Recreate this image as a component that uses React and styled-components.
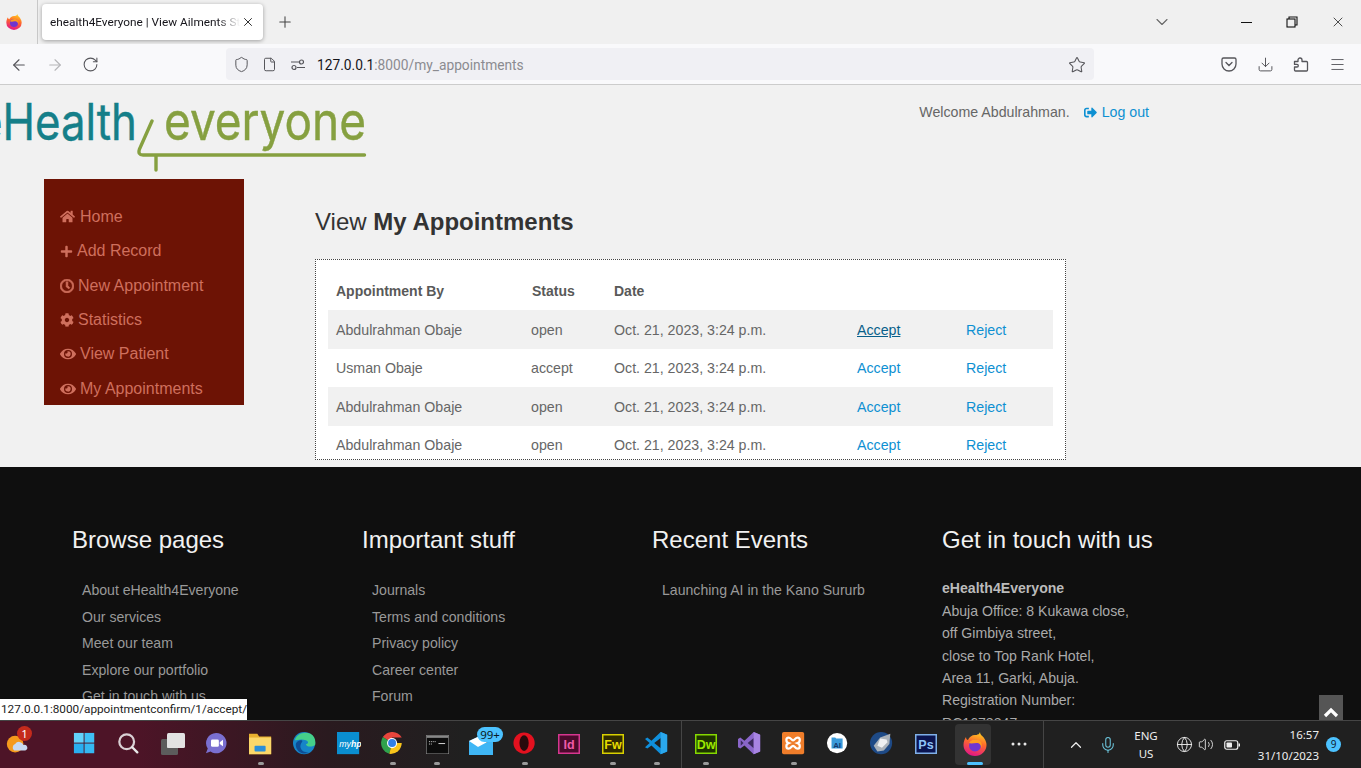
import React from "react";
import styled, { createGlobalStyle } from "styled-components";
import { ArrowLeft, ArrowRight, RotateCw, Shield, File, Star, Download, Menu, X, Plus, ChevronDown, ChevronUp, Mic, Globe, Volume2 } from "lucide-react";
import { FaHome, FaPlus, FaCog, FaEye, FaRegClock, FaSignOutAlt } from "react-icons/fa";

const Global = createGlobalStyle`
  html, body { margin: 0; padding: 0; height: 100%; overflow: hidden; }
  body { font-family: "Liberation Sans", Arial, sans-serif; background: #f1f1f1; }
  * { box-sizing: border-box; }
`;

const Screen = styled.div`
  height: 100vh; display: flex; flex-direction: column; overflow: hidden; position: relative;
`;
const TabStrip = styled.div`
  height: 44px; flex: none; background: #f0f0f0; display: flex; align-items: center; color: #222;
`;
const BrandSlot = styled.div`
  width: 38px; height: 44px; padding-left: 6px; display: flex; align-items: center; border-right: 1px solid #c8c8c8;
`;
const Tab = styled.div`
  width: 221px; height: 36px; margin-left: 4px; padding: 0 8px; background: #fff; border-radius: 4px;
  box-shadow: 0 1px 4px rgba(0,0,0,.35); display: flex; align-items: center; justify-content: space-between;
`;
const TabTitle = styled.span`
  font: 11.8px/16px Roboto, sans-serif; width: 190px; white-space: nowrap; overflow: hidden;
  color: #15141a; -webkit-mask-image: linear-gradient(to right, #000 88%, transparent);
`;
const NewTab = styled.div`
  margin-left: 13px; display: flex; color: #444;
`;
const WindowControls = styled.div`
  margin-left: auto; display: flex; align-items: center;
`;
const ListAll = styled.div`
  display: flex; color: #666; margin-right: 51px;
`;
const WinButton = styled.div`
  width: 46px; display: flex; justify-content: center; color: #111;
`;
const Toolbar = styled.div`
  height: 41px; flex: none; background: #f9f9fb; border-bottom: 1px solid #ccc; display: flex; align-items: center; padding: 1px 0 0 10px;
`;
const NavButton = styled.div`
  width: 36px; display: flex; color: ${p => (p.$off ? "#b5b5b8" : "#55555a")};
`;
const UrlBar = styled.div`
  margin: -2px 0 0 108px; width: 868px; height: 32px; background: #f0f0f4; border-radius: 4px; display: flex; align-items: center; padding: 2px 8px 0 7px; color: #55555a;
`;
const UrlIcon = styled.div`
  width: ${p => p.$w}px; display: flex;
`;
const UrlText = styled.div`
  font: 13.75px/18px Roboto, sans-serif; color: #8b8b90; margin-left: 2px;
  b { font-weight: 400; color: #15141a; }
`;
const StarSlot = styled.div`
  margin-left: auto; display: flex;
`;
const ToolActions = styled.div`
  display: flex; margin-left: 117px;
`;
const ToolButton = styled.div`
  width: 36px; display: flex; justify-content: center; color: #55555a;
`;

const Page = styled.div`
  flex: 1; min-height: 0; display: flex; flex-direction: column; overflow: hidden; background: #f1f1f1; position: relative;
`;
const Header = styled.header`
  height: 94px; flex: none; display: flex; justify-content: space-between; align-items: flex-start;
`;
const Welcome = styled.div`
  padding: 19px 212px 0 0; font-size: 14.2px; line-height: 16px; color: #666; display: flex; gap: 14px;
`;
const LogOut = styled.a`
  color: #0e90d2; display: flex; align-items: center; gap: 5px;
`;
const Body = styled.div`
  height: 288px; flex: none; display: flex; padding-left: 44px;
`;
const Sidebar = styled.nav`
  width: 200px; height: 226px; background: #6d1305; padding-top: 19.7px; flex: none;
`;
const SideItem = styled.div`
  height: 34.4px; padding: 2px 0 0 16px; font-size: 16px; color: #cf6f5d; display: flex; align-items: center; gap: ${p => p.$gap ?? 5}px; white-space: nowrap;
`;
const Main = styled.main`
  margin-left: 71px; width: 751px;
`;
const Title = styled.h1`
  margin: 27px 0 0; font-size: 24px; line-height: 32px; font-weight: 400; color: #333;
  b { font-weight: 700; }
`;
const TableBox = styled.div`
  margin-top: 21px; height: 201px; background: #fff; border: 1px dotted #444; padding: 12px 12px 0; overflow: hidden;
`;
const Table = styled.table`
  width: 725px; border-collapse: collapse; table-layout: fixed; font-size: 14.2px; color: #666;
`;
const HeadCell = styled.th`
  height: 38px; padding: 0 8px; text-align: left; font-size: 14px; font-weight: 700; color: #595959;
`;
const Row = styled.tr`
  background: ${p => (p.$alt ? "#f1f1f1" : "#fff")};
  height: ${p => (p.$alt ? 39 : 38)}px;
`;
const Cell = styled.td`
  padding: 0 8px 0 ${p => p.$pl ?? 8}px;
`;
const ActionLink = styled.a`
  color: ${p => (p.$hover ? "#095f8a" : "#0e90d2")};
  text-decoration: ${p => (p.$hover ? "underline" : "none")};
`;

const Footer = styled.footer`
  flex: 1; min-height: 0; background: #0f0f0f; overflow: hidden; padding: 57.3px 0 0 72px; display: grid; grid-template-columns: repeat(4, 290px); align-content: start;
`;
const FootCol = styled.div``;
const FootTitle = styled.h3`
  margin: 0 0 21px; font-size: 24px; line-height: 32px; font-weight: 400; color: #f1f1f1;
`;
const FootLink = styled.div`
  padding-left: 10px; font-size: 14.1px; line-height: 26.4px; color: #999;
`;
const Address = styled.div`
  font-size: 14.1px; line-height: 22.4px; color: #aaa;
  b { color: #bbb; display: block; }
`;
const StatusTip = styled.div`
  position: absolute; left: 0; bottom: 0; height: 21px; width: 247px; padding-left: 1px; background: #fff; color: #222;
  font: 11.75px/21px Roboto, sans-serif; white-space: nowrap; box-shadow: 0 0 2px rgba(0,0,0,.3);
`;
const ToTop = styled.div`
  position: absolute; right: 18px; bottom: 0; width: 24px; height: 25px; background: #555; display: flex; align-items: flex-end; justify-content: center; padding-bottom: 1px;
`;

const Taskbar = styled.div`
  height: 48px; flex: none; border-top: 1px solid #454545; display: flex; align-items: stretch; color: #fff;
  background: linear-gradient(90deg, #4d1427 0, #4d1427 10%, #2a1a1f 24%, #202020 34%, #202020 100%);
`;
const Weather = styled.div`
  width: 34px; margin-right: 29px; position: relative; display: flex; align-items: center; justify-content: center;
`;
const Slot = styled.div`
  width: 44px; position: relative; display: flex; align-items: center; justify-content: center; padding-bottom: 1px;
`;
const ActiveSlot = styled(Slot)`
  margin-left: 5px;
  &::before { content: ""; position: absolute; left: 2px; right: 6px; top: 3px; bottom: 3px; background: #333; border-radius: 4px; }
  svg { position: relative; }
`;
const RunDot = styled.span`
  position: absolute; bottom: 3px; left: 50%; transform: translateX(-50%); width: ${p => (p.$active ? 16 : 6)}px; height: 3px; border-radius: 2px; background: ${p => (p.$active ? "#4cc2ff" : "#9a9a9a")};
`;
const Badge = styled.span`
  position: absolute; border-radius: 9px; background: ${p => p.$bg}; color: ${p => p.$fg}; font: 11.5px/15px "Noto Sans", sans-serif; text-align: center;
  left: ${p => p.$l}px; top: ${p => p.$t}px; width: ${p => p.$w}px; height: ${p => p.$h}px;
`;
const Divider = styled.div`
  width: 1px; background: #454545; margin-left: ${p => p.$ml}px; margin-right: ${p => p.$mr}px;
`;
const Tray = styled.div`
  flex: 1; display: flex; align-items: center; position: relative; font: 12px/18px "Noto Sans", sans-serif; color: #eee;
`;
const TrayIcon = styled.div`
  width: ${p => p.$w}px; display: flex; justify-content: center; color: ${p => p.$c ?? "#eee"};
`;
const Lang = styled.div`
  width: 48px; text-align: center; font-size: 11.5px;
`;
const Clock = styled.div`
  width: 69px; text-align: right; font-size: 11.5px; line-height: 21px;
`;
const Count = styled.div`
  width: 15px; height: 15px; margin-left: 7px; border-radius: 50%; background: #4cc2ff; color: #102030; font-size: 10px; line-height: 15px; text-align: center;
`;

const Logo = () => (
  <svg width="372" height="94" viewBox="0 0 372 94" role="img">
    <text x="-23" y="55" textLength="160" lengthAdjust="spacingAndGlyphs" fontFamily="Inter, sans-serif" fontWeight="400" fontSize="51" fill="#157f89" stroke="#157f89" strokeWidth="0.4">eHealth</text>
    <text x="164" y="55" textLength="202" lengthAdjust="spacingAndGlyphs" fontFamily="Inter, sans-serif" fontWeight="400" fontSize="53" fill="#86a040" stroke="#86a040" strokeWidth="0.4">everyone</text>
    <path d="M152 36 L139.500 64 Q137.500 70 143 70 H364.500 M156 70 V85" fill="none" stroke="#86a040" strokeWidth="3.400" strokeLinecap="round" />
  </svg>
);

const FirefoxIcon = ({ s = 16 }) => (
  <svg width={s} height={s} viewBox="0 0 24 24">
    <defs>
      <linearGradient id={`ff${s}`} x1="0.700" y1="0" x2="0.400" y2="1"><stop offset="0" stopColor="#ffd21f" /><stop offset=".45" stopColor="#ff6a2b" /><stop offset="1" stopColor="#e31587" /></linearGradient>
    </defs>
    <path d="M17 0c0 3 3 4 4 6 2 3 2.500 5 2.500 7a11.500 11 0 1 1-23 0c0-3 1-6 2.500-8 0 2 1 3 2 3 1-3 4-5 7-5 2 0 4 0 5-3z" fill={`url(#ff${s})`} />
    <circle cx="12" cy="13.500" r="6" fill="#6f35d0" />
    <path d="M6 11c2-3.500 6-4.500 9.500-3 3.500 1.500 4 5.500 2.500 8.500 .5-3.500-1.500-5.500-4.500-5.500-2.500 0-5.500 1-7.500 0z" fill="#ff9a1f" />
  </svg>
);
const Ic = ({ children, w = 26, h = 26, vb = "0 0 26 26" }) => <svg width={w} height={h} viewBox={vb}>{children}</svg>;

const WeatherIcon = () => (
  <Ic w={24} h={24}><circle cx="11" cy="12" r="9" fill="#f59a1c" /><path d="M10 19a4 4 0 0 1 1-7 5 5 0 0 1 9 1 3 3 0 0 1 2 6z" fill="#c7d9f0" /></Ic>
);
const WindowsIcon = () => (
  <Ic w={24} h={24}><g fill="#35b8f2"><rect x="1" y="1" width="10.500" height="10.500" fill="#62d2fb" /><rect x="12.500" y="1" width="10.500" height="10.500" fill="#3fc0f7" /><rect x="1" y="12.500" width="10.500" height="10.500" fill="#29aef0" /><rect x="12.500" y="12.500" width="10.500" height="10.500" /></g></Ic>
);
const SearchIcon = () => (
  <Ic w={24} h={24}><circle cx="10.500" cy="10.500" r="8" fill="none" stroke="#d9d0d4" strokeWidth="2.400" /><path d="M16.500 16.500 L22 22" stroke="#e8e8e8" strokeWidth="2.600" strokeLinecap="round" /></Ic>
);
const TaskViewIcon = () => (
  <Ic w={26} h={24} vb="0 0 26 24"><rect x="1" y="7" width="17" height="16" rx="1.500" fill="#5c5c5c" /><rect x="7" y="7" width="11" height="9" fill="#9b9b9b" /><rect x="7" y="1" width="18" height="15" rx="1.500" fill="#e2e2e2" /></Ic>
);
const TeamsIcon = () => (
  <Ic w={24} h={24}><path d="M12 1a11 11 0 1 1-6 20l-5 2 2-5A11 11 0 0 1 12 1z" fill="#7a6fd0" /><rect x="6.500" y="8" width="8.500" height="8" rx="1.500" fill="#fff" /><path d="M16 11l3.500-2.500v7L16 13z" fill="#fff" /></Ic>
);
const ExplorerIcon = () => (
  <Ic w={24} h={24}><path d="M0 2h9l2 3H24v19H0z" fill="#e8b02f" /><rect y="6" width="24" height="18" fill="#fbd769" /><rect x="6" y="15" width="12" height="6" rx="1" fill="#2a8ed8" /></Ic>
);
const EdgeIcon = () => (
  <Ic w={24} h={24}><circle cx="12" cy="12" r="12" fill="#1684c8" /><path d="M2 9C4 2 12-1 19 2c4 2 6 7 5 12-4 3-10 2-10-1 3 0 3-3 0-4C9 7 4 9 2 9z" fill="#45cf8a" /><path d="M9 12c-3 5 1 11 8 10-7 4-14-2-14-8 0-3 3-5 6-5 1 0 2 1 0 3z" fill="#0d4d96" /></Ic>
);
const MyHpIcon = () => (
  <Ic w={24} h={24}><rect width="24" height="24" fill="#0a8ed0" /><text x="2.500" y="16" fontSize="9.500" fontStyle="italic" fontFamily="Liberation Sans, sans-serif" fill="#fff">my<tspan fontWeight="700">hp</tspan></text></Ic>
);
const ChromeIcon = () => (
  <Ic w={24} h={24}><path d="M12 12 2 5.500A12 12 0 0 1 22.500 6H12z" fill="#e8453c" /><path d="M12 12 2 5.500A12 12 0 0 0 9 23.600z" fill="#2fa24c" /><path d="M12 12h10.500A12 12 0 0 1 9 23.600z" fill="#f8c41b" /><circle cx="12" cy="12" r="5.500" fill="#fff" /><circle cx="12" cy="12" r="4.300" fill="#2f7fe8" /></Ic>
);
const CmdIcon = () => (
  <Ic w={23} h={19} vb="0 0 24 20"><rect width="24" height="20" fill="#0c0c0c" stroke="#999" strokeWidth="1" /><rect x="0.500" y="0.500" width="23" height="2.500" fill="#888" /><path d="M3 7h7M3 9.500h4" stroke="#ddd" strokeWidth="1" strokeDasharray="1 1" /><path d="M13 9h7" stroke="#ddd" strokeWidth="1" /></Ic>
);
const MailIcon = () => (
  <Ic w={24} h={22} vb="0 0 24 22"><path d="M0 8 17 0v22H0z" fill="#20a0ee" /><path d="M0 8l9 6 15-8v16H0z" fill="#3fb6f5" /><path d="M0 8 17 0l7 6-15 8z" fill="#fff" /></Ic>
);
const OperaIcon = () => (
  <Ic w={24} h={24}><ellipse cx="12" cy="12" rx="11.500" ry="11.500" fill="#e3111f" /><ellipse cx="12" cy="12" rx="5" ry="8.500" fill="#2a0a0c" /></Ic>
);
const AppTile = ({ label, line, fill, color, w = 22, h = 20 }) => (
  <Ic w={w} h={h} vb={`0 0 ${w} ${h}`}>
    <rect x="0.750" y="0.750" width={w - 1.5} height={h - 1.5} fill={fill} stroke={line} strokeWidth="1.500" />
    <text x={w / 2} y={h - 5} textAnchor="middle" fontSize="12.500" fontWeight="700" fontFamily="Liberation Sans, sans-serif" fill={color}>{label}</text>
  </Ic>
);
const VsCodeIcon = () => (
  <Ic w={24} h={24}><path d="M17 0l7 3v18l-7 3L7 14.500 2.500 18 0 16.500 5 12 0 7.500 2.500 6 7 9.500z" fill="#0f8fdc" /><path d="M17 6.500 10 12l7 5.500z" fill="#202020" /><path d="M17 0l7 3v18l-7 3z" fill="#2aa7ec" /></Ic>
);
const VisualStudioIcon = () => (
  <Ic w={24} h={24}><path d="M17 0l7 3v18l-7 3L7 14.500 2.500 18 0 16.500v-9L2.500 6 7 9.500z" fill="#8a66c9" /><path d="M17 6.500 10.500 12l6.500 5.500z" fill="#3a2a5c" /><path d="M3 9v6l3-3z" fill="#3a2a5c" /><path d="M17 0l7 3v18l-7 3z" fill="#a784e2" /></Ic>
);
const XamppIcon = () => (
  <Ic w={24} h={24}><rect width="24" height="24" rx="2" fill="#ef7d2a" /><path d="M7 6c-3 0-3 5 0 6-3 1-3 6 0 6 3 0 3-3 5-3s2 3 5 3c3 0 3-5 0-6 3-1 3-6 0-6-3 0-3 3-5 3s-2-3-5-3z" fill="none" stroke="#fff" strokeWidth="2.400" /></Ic>
);
const AiIcon = () => (
  <Ic w={24} h={24}><circle cx="12" cy="12" r="11" fill="#fff" /><path d="M6 6h4l1 1h7v11H6z" fill="#3a9ad9" /><text x="12" y="17" textAnchor="middle" fontSize="8.500" fontWeight="700" fontFamily="Liberation Sans, sans-serif" fill="#123a70">AI</text></Ic>
);
const PenIcon = () => (
  <Ic w={24} h={24}><circle cx="12" cy="12" r="12" fill="#1e4a86" /><path d="M4 15 11 6l11-4-1 11-6 7-7 1z" fill="#aab2ba" /><path d="M11 7l7 1 1 3-6 6-5-2z" fill="#eef0f2" /></Ic>
);
const BatteryIcon = () => (
  <Ic w={16} h={12} vb="0 0 16 12"><rect x="0.750" y="1.750" width="13" height="8.500" rx="2" fill="none" stroke="#eee" strokeWidth="1.200" /><rect x="2.500" y="3.500" width="5.500" height="5" rx="0.800" fill="#eee" /><rect x="14.500" y="4.500" width="1.500" height="3" fill="#eee" /></Ic>
);
const PocketIcon = () => (
  <Ic w={16} h={16} vb="0 0 16 16"><path d="M2.500 2h11A1.500 1.500 0 0 1 15 3.500V8a7 7 0 0 1-14 0V3.500A1.500 1.500 0 0 1 2.500 2z" fill="none" stroke="currentColor" strokeWidth="1.300" /><path d="M5 6.500 8 9.500 11 6.500" fill="none" stroke="currentColor" strokeWidth="1.300" strokeLinecap="round" /></Ic>
);
const PuzzleIcon = () => (
  <Ic w={16} h={16} vb="0 0 16 16"><path d="M1.500 5.500H5V4a2 2 0 1 1 4 0v1.500h4.500a1 1 0 0 1 1 1V14a1 1 0 0 1-1 1H2.500a1 1 0 0 1-1-1v-3H4a1.300 1.300 0 0 0 0-2.600H1.500z" fill="none" stroke="currentColor" strokeWidth="1.300" strokeLinejoin="round" /></Ic>
);
const RestoreIcon = () => (
  <Ic w={12} h={12} vb="0 0 12 12"><rect x="1" y="3" width="8" height="8" fill="none" stroke="currentColor" strokeWidth="1.100" /><path d="M3 3V1h8v8H9" fill="none" stroke="currentColor" strokeWidth="1.100" /></Ic>
);
const MinimizeIcon = () => (
  <Ic w={11} h={1} vb="0 0 11 1"><rect width="11" height="1" fill="currentColor" /></Ic>
);
const SitePermsIcon = () => (
  <Ic w={16} h={16} vb="0 0 16 16"><circle cx="4" cy="10.500" r="2" fill="none" stroke="currentColor" strokeWidth="1.200" /><circle cx="11.500" cy="5" r="2" fill="none" stroke="currentColor" strokeWidth="1.200" /><path d="M1 5h8M7 10.500h8" stroke="currentColor" strokeWidth="1.200" /></Ic>
);
const DotsIcon = () => (
  <Ic w={16} h={4} vb="0 0 16 4"><circle cx="2" cy="2" r="1.500" fill="#e8e8e8" /><circle cx="8" cy="2" r="1.500" fill="#e8e8e8" /><circle cx="14" cy="2" r="1.500" fill="#e8e8e8" /></Ic>
);
const TopArrow = () => (
  <Ic w={16} h={14} vb="0 0 16 14"><path d="M2 11 8 5l6 6" fill="none" stroke="#fff" strokeWidth="3.200" /></Ic>
);

const nav = [
  { icon: <FaHome size={15} />, label: "Home", gap: 5 },
  { icon: <FaPlus size={13} />, label: "Add Record", gap: 4 },
  { icon: <FaRegClock size={14} stroke="currentColor" strokeWidth={30} />, label: "New Appointment", gap: 4 },
  { icon: <FaCog size={14} />, label: "Statistics", gap: 4 },
  { icon: <FaEye size={16} />, label: "View Patient", gap: 4 },
  { icon: <FaEye size={16} />, label: "My Appointments", gap: 4 },
];
const rows = [
  { name: "Abdulrahman Obaje", status: "open" },
  { name: "Usman Obaje", status: "accept" },
  { name: "Abdulrahman Obaje", status: "open" },
  { name: "Abdulrahman Obaje", status: "open" },
];
const columns = [
  { title: "Browse pages", links: ["About eHealth4Everyone", "Our services", "Meet our team", "Explore our portfolio", "Get in touch with us"] },
  { title: "Important stuff", links: ["Journals", "Terms and conditions", "Privacy policy", "Career center", "Forum"] },
  { title: "Recent Events", links: ["Launching AI in the Kano Sururb"] },
];
const pinnedA = [
  [<WindowsIcon />], [<SearchIcon />], [<TaskViewIcon />], [<TeamsIcon />], [<ExplorerIcon />, true], [<EdgeIcon />], [<MyHpIcon />], [<ChromeIcon />, true], [<CmdIcon />, true],
  [<MailIcon />, false, <Badge $l={18} $t={6} $w={26} $h={15} $bg="#4cc2ff" $fg="#0b1a26">99+</Badge>],
  [<OperaIcon />, true],
  [<AppTile label="Id" line="#d6368f" fill="#4a0a2c" color="#f05aa8" />],
  [<AppTile label="Fw" line="#d8d000" fill="#2f2b00" color="#e6dc00" />, true],
  [<VsCodeIcon />, true],
];
const pinnedB = [
  [<AppTile label="Dw" line="#85d800" fill="#1e3300" color="#9be800" />, true],
  [<VisualStudioIcon />], [<XamppIcon />, true], [<AiIcon />], [<PenIcon />],
  [<AppTile label="Ps" line="#7fb0e8" fill="#0a1450" color="#8fc4f8" />],
];
const Pinned = ({ items }) => items.map(([icon, run, badge], i) => (
  <Slot key={i}>{icon}{run && <RunDot />}{badge}</Slot>
));

export default function App() {
  return (
    <Screen>
      <Global />
      <TabStrip>
        <BrandSlot><FirefoxIcon /></BrandSlot>
        <Tab>
          <TabTitle>ehealth4Everyone | View Ailments St</TabTitle>
          <X size={14} strokeWidth={1.6} />
        </Tab>
        <NewTab><Plus size={18} strokeWidth={1.4} /></NewTab>
        <WindowControls>
          <ListAll><ChevronDown size={20} strokeWidth={1.3} /></ListAll>
          <WinButton><MinimizeIcon /></WinButton>
          <WinButton><RestoreIcon /></WinButton>
          <WinButton><X size={16} strokeWidth={1.1} /></WinButton>
        </WindowControls>
      </TabStrip>
      <Toolbar>
        <NavButton><ArrowLeft size={18} strokeWidth={1.5} /></NavButton>
        <NavButton $off><ArrowRight size={18} strokeWidth={1.5} /></NavButton>
        <NavButton><RotateCw size={17} strokeWidth={1.5} /></NavButton>
        <UrlBar>
          <UrlIcon $w={29}><Shield size={17} strokeWidth={1.4} /></UrlIcon>
          <UrlIcon $w={28}><File size={15} strokeWidth={1.6} /></UrlIcon>
          <UrlIcon $w={25}><SitePermsIcon /></UrlIcon>
          <UrlText><b>127.0.0.1</b>:8000/my_appointments</UrlText>
          <StarSlot><Star size={18} strokeWidth={1.4} /></StarSlot>
        </UrlBar>
        <ToolActions>
          <ToolButton><PocketIcon /></ToolButton>
          <ToolButton><Download size={17} strokeWidth={1.4} /></ToolButton>
          <ToolButton><PuzzleIcon /></ToolButton>
          <ToolButton><Menu size={17} strokeWidth={1.3} /></ToolButton>
        </ToolActions>
      </Toolbar>
      <Page>
        <Header>
          <Logo />
          <Welcome>
            <span>Welcome Abdulrahman.</span>
            <LogOut><FaSignOutAlt size={13} /> Log out</LogOut>
          </Welcome>
        </Header>
        <Body>
          <Sidebar>
            {nav.map(n => <SideItem key={n.label} $gap={n.gap}>{n.icon}<span>{n.label}</span></SideItem>)}
          </Sidebar>
          <Main>
            <Title>View <b>My Appointments</b></Title>
            <TableBox>
              <Table>
                <colgroup><col width="196" /><col width="82" /><col width="243" /><col width="109" /><col width="95" /></colgroup>
                <thead>
                  <tr><HeadCell>Appointment By</HeadCell><HeadCell>Status</HeadCell><HeadCell>Date</HeadCell><HeadCell /><HeadCell /></tr>
                </thead>
                <tbody>
                  {rows.map((r, i) => (
                    <Row key={i} $alt={i % 2 === 0}>
                      <Cell>{r.name}</Cell>
                      <Cell $pl={7}>{r.status}</Cell>
                      <Cell>Oct. 21, 2023, 3:24 p.m.</Cell>
                      <Cell><ActionLink $hover={i === 0}>Accept</ActionLink></Cell>
                      <Cell><ActionLink>Reject</ActionLink></Cell>
                    </Row>
                  ))}
                </tbody>
              </Table>
            </TableBox>
          </Main>
        </Body>
        <Footer>
          {columns.map(c => (
            <FootCol key={c.title}>
              <FootTitle>{c.title}</FootTitle>
              {c.links.map(l => <FootLink key={l}>{l}</FootLink>)}
            </FootCol>
          ))}
          <FootCol>
            <FootTitle>Get in touch with us</FootTitle>
            <Address>
              <b>eHealth4Everyone</b>
              Abuja Office: 8 Kukawa close,<br />
              off Gimbiya street,<br />
              close to Top Rank Hotel,<br />
              Area 11, Garki, Abuja.<br />
              Registration Number:<br />
              RC1678847
            </Address>
          </FootCol>
        </Footer>
        <StatusTip>127.0.0.1:8000/appointmentconfirm/1/accept/</StatusTip>
        <ToTop><TopArrow /></ToTop>
      </Page>
      <Taskbar>
        <Weather>
          <WeatherIcon />
          <Badge $l={17} $t={5} $w={15} $h={15} $bg="#c42b1c" $fg="#fff">1</Badge>
        </Weather>
        <Pinned items={pinnedA} />
        <Divider $ml={2} $mr={2} />
        <Pinned items={pinnedB} />
        <ActiveSlot><FirefoxIcon s={24} /><RunDot $active /></ActiveSlot>
        <Slot><DotsIcon /></Slot>
        <Divider $ml={2} $mr={14} />
        <Tray>
          <TrayIcon $w={36}><ChevronUp size={18} strokeWidth={1.6} /></TrayIcon>
          <TrayIcon $w={28} $c="#6cc5dc"><Mic size={18} strokeWidth={1.4} /></TrayIcon>
          <Lang>ENG<br />US</Lang>
          <TrayIcon $w={28}><Globe size={17} strokeWidth={1.3} /></TrayIcon>
          <TrayIcon $w={16}><Volume2 size={17} strokeWidth={1.3} /></TrayIcon>
          <TrayIcon $w={36}><BatteryIcon /></TrayIcon>
          <Clock>16:57<br />31/10/2023</Clock>
          <Count>9</Count>
        </Tray>
      </Taskbar>
    </Screen>
  );
}
